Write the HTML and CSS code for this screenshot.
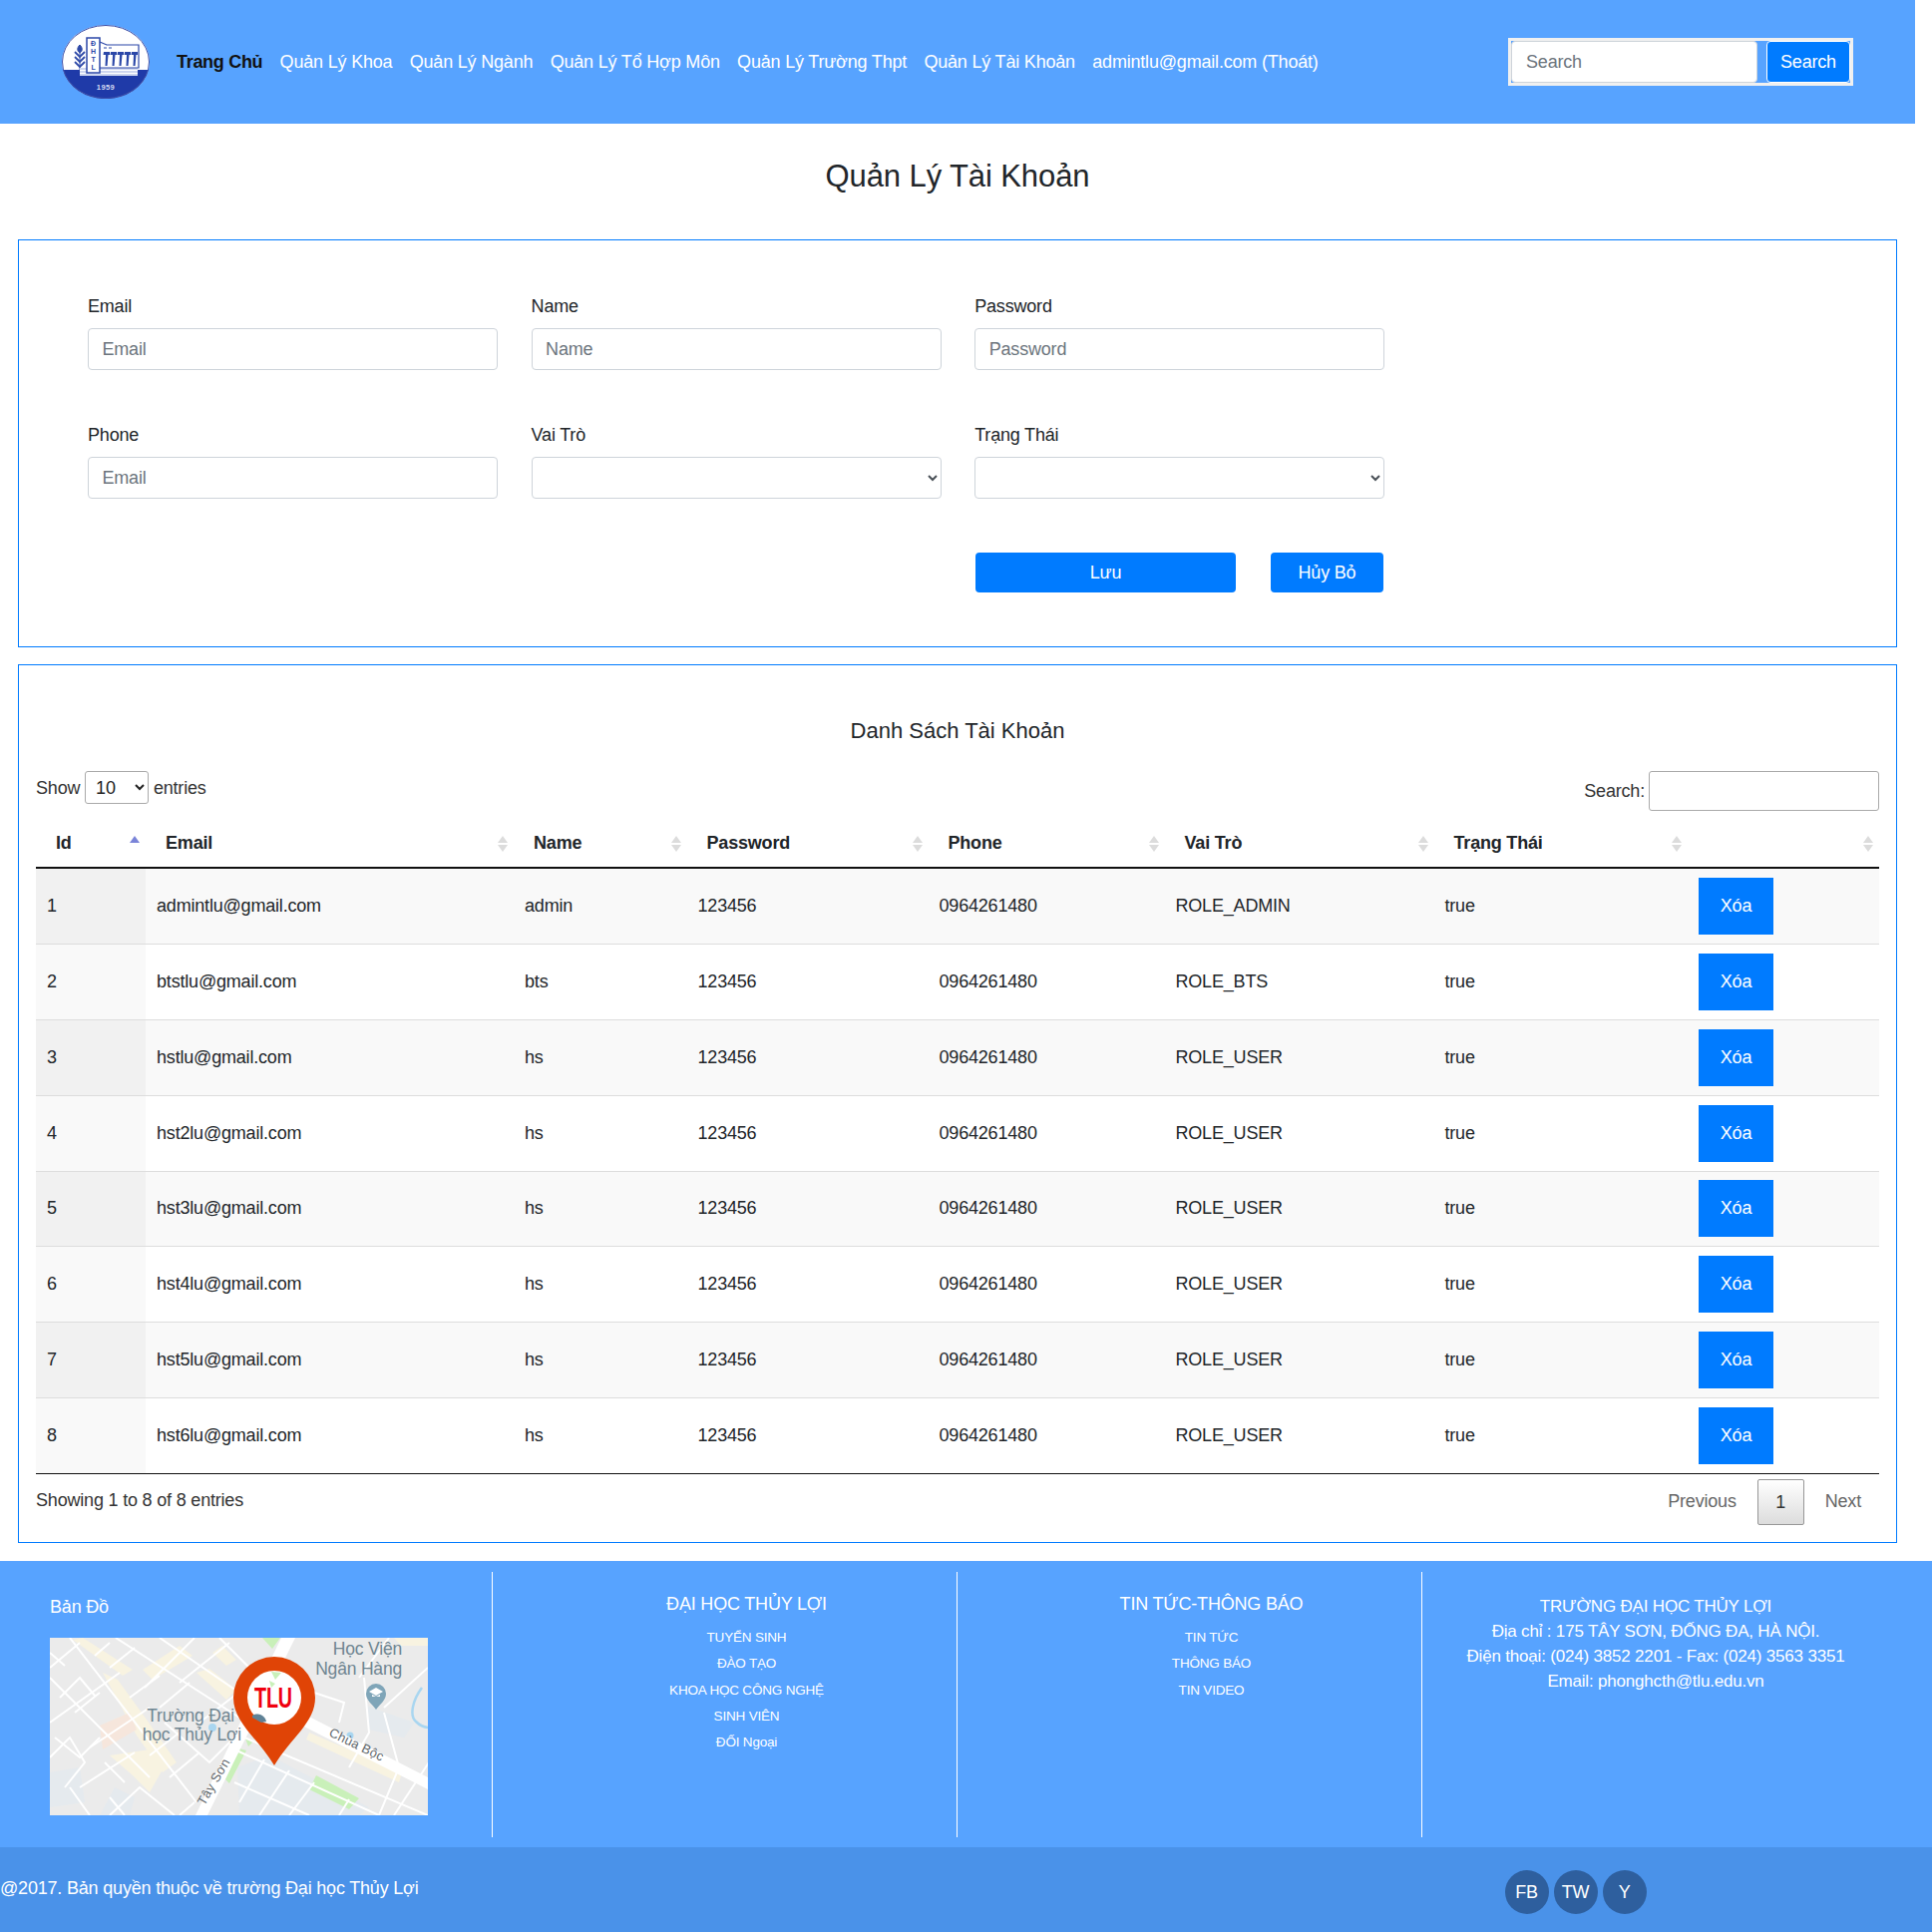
FILE: index.html
```html
<!DOCTYPE html>
<html lang="vi">

<head>
    <meta charset="UTF-8">
    <meta name="viewport" content="width=device-width, initial-scale=1.0">
    <title>Quản Lý Tài Khoản</title>
    <link rel="stylesheet" href="styles.css">
</head>

<body>
    <div class="page">
        <header class="topbar">
            <svg class="logo" viewBox="0 0 88 74">
                <ellipse cx="44" cy="37" rx="44" ry="37" fill="#fff" />
                <path d="M1 45 H87 A44 37 0 0 1 1 45 Z" fill="#1f3aa8" />
                <ellipse cx="44" cy="37" rx="43.500" ry="36.500" fill="none" stroke="#3c4fa8" />
                <path d="M18 20 c-3 3 -3 6 0 8 c3 -2 3 -5 0 -8z M18 28 V47" fill="#2f4aa8" stroke="#2f4aa8" />
                <path d="M13 27 l5 5 5 -5 M13 32 l5 5 5 -5 M13 37 l5 5 5 -5" fill="none" stroke="#2f4aa8" stroke-width="1.800" />
                <rect x="18" y="43" width="58" height="8" fill="#cdd5ef" />
                <path d="M18 45.500 H76 M18 48.500 H76" stroke="#fff" />
                <path d="M38 17 L45 20 H77 V43 H38" fill="#fff" stroke="#2b47a8" stroke-width="1.200" />
                <rect x="25" y="13" width="13" height="35" fill="#fff" stroke="#2b47a8" stroke-width="1.500" />
                <path d="M42 23 h3 M47 23 h3" stroke="#2b47a8" stroke-width="1.200" />
                <path d="M42 27 h6 v3 h-1.500 l-1 11 h-2 l0.500 -11 h-2.500z M49 27 h6 v3 h-1.500 l-1 11 h-2 l0.500 -11 h-2.500z M56 27 h6 v3 h-1.500 l-1 11 h-2 l0.500 -11 h-2.500z M63 27 h6 v3 h-1.500 l-1 11 h-2 l0.500 -11 h-2.500z M70 27 h6 v3 h-1.500 l-1 11 h-2 l0.500 -11 h-2.500z" fill="#2b47a8" />
                <text class="logo-letters" x="31.500" y="21">Đ</text>
                <text class="logo-letters" x="31.500" y="29">H</text>
                <text class="logo-letters" x="31.500" y="37">T</text>
                <text class="logo-letters" x="31.500" y="45">L</text>
                <text class="logo-year" x="44" y="65">1959</text>
            </svg>
            <nav class="nav">
                <a class="active" href="#">Trang Chủ</a>
                <a href="#">Quản Lý Khoa</a>
                <a href="#">Quản Lý Ngành</a>
                <a href="#">Quản Lý Tổ Hợp Môn</a>
                <a href="#">Quản Lý Trường Thpt</a>
                <a href="#">Quản Lý Tài Khoản</a>
                <a href="#">admintlu@gmail.com (Thoát)</a>
            </nav>
            <form class="top-search">
                <input type="text" placeholder="Search">
                <button type="button">Search</button>
            </form>
        </header>

        <h1 class="page-title">Quản Lý Tài Khoản</h1>

        <section class="card form-card">
            <div class="form-grid">
                <div class="form-group">
                    <label for="email">Email</label>
                    <input type="text" id="email" placeholder="Email">
                </div>
                <div class="form-group">
                    <label for="name">Name</label>
                    <input type="text" id="name" placeholder="Name">
                </div>
                <div class="form-group">
                    <label for="password">Password</label>
                    <input type="text" id="password" placeholder="Password">
                </div>
                <div class="form-group">
                    <label for="phone">Phone</label>
                    <input type="text" id="phone" placeholder="Email">
                </div>
                <div class="form-group">
                    <label for="role">Vai Trò</label>
                    <select id="role"></select>
                </div>
                <div class="form-group">
                    <label for="status">Trạng Thái</label>
                    <select id="status"></select>
                </div>
            </div>
            <div class="form-actions">
                <button class="btn btn-save">Lưu</button>
                <button class="btn btn-cancel">Hủy Bỏ</button>
            </div>
        </section>

        <section class="card table-card">
            <h2 class="table-title">Danh Sách Tài Khoản</h2>
            <div class="table-tools">
                <div class="length">Show <select>
                        <option>10</option>
                    </select> entries</div>
                <div class="filter">Search: <input type="text"></div>
            </div>
            <table class="data-table">
                <colgroup>
                    <col class="col-id">
                    <col class="col-email">
                    <col class="col-name">
                    <col class="col-pass">
                    <col class="col-phone">
                    <col class="col-role">
                    <col class="col-status">
                    <col class="col-action">
                </colgroup>
                <thead>
                    <tr>
                        <th class="sort-asc">Id</th>
                        <th>Email</th>
                        <th>Name</th>
                        <th>Password</th>
                        <th>Phone</th>
                        <th>Vai Trò</th>
                        <th>Trạng Thái</th>
                        <th></th>
                    </tr>
                </thead>
                <tbody id="rows"></tbody>
            </table>
            <div class="table-foot">
                <div>Showing 1 to 8 of 8 entries</div>
                <div class="pager">
                    <a href="#">Previous</a>
                    <a class="current" href="#">1</a>
                    <a href="#">Next</a>
                </div>
            </div>
        </section>
    </div>

    <footer>
        <div class="footer-main">
            <div class="footer-col map-col">
                <h4>Bản Đồ</h4>
                <svg class="map" viewBox="0 0 379 178">
                    <rect width="379" height="178" fill="#ebebeb" />
                    <!-- built-up areas -->
                    <g fill="#f8f3e1">
                        <path d="M93 32 L130 8 L143 18 L103 42Z M163 15 L173 8 L187 22 L177 28Z M147 35 L160 31 L187 52 L177 62Z" />
                        <path d="M23 2 L33 0 L83 32 L73 38Z M53 35 L68 42 L97 82 L127 125 L113 135 L87 98Z" />
                        <path d="M60 118 L100 112 L113 132 L100 155 L83 138Z M260 95 L353 135 L350 145 L257 102Z" />
                        <path d="M345 0 H379 V8 H352Z M320 118 L350 130 L345 142 L315 128Z" />
                    </g>
                    <path d="M50 88 L80 75 L87 92 L53 112Z" fill="#f6e6dc" />
                    <g fill="#e5eaee">
                        <path d="M188 130 L220 118 L320 170 L310 178 H190Z" />
                        <path d="M317 68 L365 85 L355 100 L320 92Z M0 135 L30 130 L35 165 L0 170Z M65 150 L85 160 L80 178 H50Z" />
                    </g>
                    <g fill="#c9f0b9">
                        <path d="M213 0 H231 L223 11Z M190 111 L197 113 L180 146 L176 142Z" />
                        <path d="M267 138 L310 161 L300 172 L260 152Z M196 101 L203 105 L199 109Z" />
                    </g>
                    <!-- small streets -->
                    <g fill="none" stroke="#fff" stroke-width="2">
                        <path d="M20 0 L147 165 M0 40 L100 140 M66 0 L190 80 M110 0 L200 62 M170 0 L215 45" />
                        <path d="M0 30 L30 5 M0 85 L70 35 M40 110 L100 70 M30 150 L85 115 M95 50 L145 0 M130 45 L180 5 M150 85 L215 35" />
                        <path d="M0 120 L20 100 L35 125 L15 150 M60 178 L90 150 L125 178 M40 178 L20 150 M115 85 L160 125 L195 90" />
                        <path d="M0 15 L15 28 M10 60 L30 40 L45 58 M25 75 L50 55 M45 18 L60 5 M60 30 L85 10 M80 60 L110 38 M110 70 L140 45" />
                        <path d="M5 100 L30 120 L50 100 M55 125 L75 145 M100 118 L130 95 M120 140 L150 115 M130 178 L145 165 M75 178 L60 160" />
                        <path d="M185 112 L330 178 M195 100 L379 178 M185 145 L260 178 M215 122 L190 165 M240 133 L210 178 M265 145 L240 178 M300 162 L290 178" />
                        <path d="M265 55 L295 65 L290 85 M315 40 L320 95 L300 130 M335 75 L350 130 L330 178 M380 125 L345 178 M340 0 L310 40 M379 30 L335 70" />
                    </g>
                    <path d="M373 50 C364 62 360 78 367 84 C371 88 376 90 380 90" fill="none" stroke="#a9d6f0" stroke-width="2.500" />
                    <circle cx="301" cy="98" r="3.500" fill="#a9d6f0" />
                    <circle cx="163" cy="90" r="4" fill="#a9d6f0" />
                    <!-- main roads -->
                    <path d="M146 178 L232 0 H246 L158 178Z M250 74 L379 140 V152 L245 84Z" fill="#fff" />
                    <text class="map-label" x="353" y="17" text-anchor="end">Học Viện</text>
                    <text class="map-label" x="353" y="37" text-anchor="end">Ngân Hàng</text>
                    <text class="map-label" x="185" y="84" text-anchor="end">Trường Đại</text>
                    <text class="map-label" x="192" y="103" text-anchor="end">học Thủy Lợi</text>
                    <text class="map-road" transform="translate(279 98) rotate(26)">Chùa Bộc</text>
                    <text class="map-road" transform="translate(155 169) rotate(-60)">Tây Sơn</text>
                    <path d="M317 56 a10 10 0 1 1 20 0 c0 7 -6 10 -10 16 c-4 -6 -10 -9 -10 -16z" fill="#7fa5b8" />
                    <path d="M320 54 l7 -4 7 4 -7 4z M323 57 v2 h8 v-2 l-4 2z" fill="#fff" />
                    <!-- pin -->
                    <path d="M225 128 C208 100 184 85 184 60 A41 41 0 0 1 266 60 C266 85 242 100 225 128Z" fill="#e04406" />
                    <circle cx="225" cy="60" r="27" fill="#fff" />
                    <path d="M222 34 L232 35 L226 42Z M220 43 L226 46 L222 50Z" fill="#c9f0b9" />
                    <path d="M203 78 A9 9 0 0 1 217 84 L212 85 L203 80Z" fill="#5f8296" />
                    <text class="pin-text" x="205" y="70" textLength="38" lengthAdjust="spacingAndGlyphs">TLU</text>
                </svg>
            </div>
            <div class="footer-col link-col">
                <h4>ĐẠI HỌC THỦY LỢI</h4>
                <a href="#">TUYỂN SINH</a>
                <a href="#">ĐÀO TẠO</a>
                <a href="#">KHOA HỌC CÔNG NGHỆ</a>
                <a href="#">SINH VIÊN</a>
                <a href="#">ĐỐI Ngoại</a>
            </div>
            <div class="footer-col link-col">
                <h4>TIN TỨC-THÔNG BÁO</h4>
                <a href="#">TIN TỨC</a>
                <a href="#">THÔNG BÁO</a>
                <a href="#">TIN VIDEO</a>
            </div>
            <div class="footer-col address-col">
                <p>TRƯỜNG ĐẠI HỌC THỦY LỢI</p>
                <p>Địa chỉ : 175 TÂY SƠN, ĐỐNG ĐA, HÀ NỘI.</p>
                <p>Điện thoại: (024) 3852 2201 - Fax: (024) 3563 3351</p>
                <p>Email: phonghcth@tlu.edu.vn</p>
            </div>
        </div>
        <div class="footer-bottom">
            <p>@2017. Bản quyền thuộc về trường Đại học Thủy Lợi</p>
            <div class="social">
                <a href="#">FB</a>
                <a href="#">TW</a>
                <a href="#">Y</a>
            </div>
        </div>
    </footer>

    <script>
        const accounts = [
            [1, 'admintlu@gmail.com', 'admin', 'ROLE_ADMIN'],
            [2, 'btstlu@gmail.com', 'bts', 'ROLE_BTS'],
            [3, 'hstlu@gmail.com', 'hs', 'ROLE_USER'],
            [4, 'hst2lu@gmail.com', 'hs', 'ROLE_USER'],
            [5, 'hst3lu@gmail.com', 'hs', 'ROLE_USER'],
            [6, 'hst4lu@gmail.com', 'hs', 'ROLE_USER'],
            [7, 'hst5lu@gmail.com', 'hs', 'ROLE_USER'],
            [8, 'hst6lu@gmail.com', 'hs', 'ROLE_USER']
        ];

        const rows = document.getElementById('rows');
        accounts.forEach(a => {
            let row = document.createElement('tr');
            row.innerHTML = `<td>${a[0]}</td><td>${a[1]}</td><td>${a[2]}</td><td>123456</td>
                <td>0964261480</td><td>${a[3]}</td><td>true</td><td><button class="btn-delete">Xóa</button></td>`;
            rows.appendChild(row);
        });
    </script>
</body>

</html>
```

FILE: styles.css
```css
* {
    box-sizing: border-box;
}

body {
    font-family: "Liberation Sans", Arial, sans-serif;
    font-size: 16px;
    line-height: 1.5;
    letter-spacing: -0.19px;
    color: #212529;
    margin: 0;
    padding: 0;
    background: #fff;
}

a {
    text-decoration: none;
}

input,
select,
button {
    letter-spacing: inherit;
}

.page {
    width: 1920px;
}

/* top bar */
.topbar {
    height: 124px;
    background: #57a3ff;
    display: flex;
    align-items: center;
    padding-left: 62px;
}

.logo {
    width: 88px;
    height: 74px;
    flex: none;
}

.logo-letters {
    font-size: 7px;
    font-weight: bold;
    fill: #2b47a8;
    text-anchor: middle;
}

.logo-year {
    font-size: 7.500px;
    font-weight: bold;
    letter-spacing: 0.4px;
    fill: #d6dcf2;
    text-anchor: middle;
}

.nav {
    display: flex;
    gap: 17.300px;
    margin-left: 27px;
    font-size: 18px;
}

.nav a {
    color: #fff;
    white-space: nowrap;
}

.nav a.active {
    color: #111;
    font-weight: bold;
    letter-spacing: -0.3px;
}

.top-search {
    margin-left: auto;
    margin-right: 62px;
    width: 346px;
    height: 48px;
    border: 3px solid #f0f0f0;
    display: flex;
    justify-content: space-between;
}

.top-search input {
    width: 247px;
    border: 1px solid #ced4da;
    border-radius: 4px;
    padding: 6px 14px;
    font: inherit;
    font-size: 18px;
}

.top-search input::placeholder {
    color: #6c757d;
}

.top-search button {
    width: 84px;
    background: #007bff;
    color: #fff;
    border: 1px solid #fff;
    border-radius: 4px;
    font: inherit;
    font-size: 18px;
}

.page-title {
    margin: 0;
    padding-top: 33px;
    height: 116px;
    font-size: 31px;
    font-weight: 400;
    letter-spacing: -0.1px;
    line-height: 40px;
    text-align: center;
}

.card {
    margin: 0 18px;
    border: 1px solid #007bff;
}

/* form */
.form-card {
    height: 409px;
    padding: 53px 0 0 69px;
    margin-bottom: 17px;
}

.form-grid {
    display: grid;
    grid-template-columns: repeat(3, 411px);
    column-gap: 33.600px;
    row-gap: 52px;
}

label {
    display: block;
    font-size: 18px;
    line-height: 27px;
    margin-bottom: 8px;
}

.form-group input,
.form-group select {
    display: block;
    width: 100%;
    height: 42px;
    padding: 6px 13.500px;
    border: 1px solid #ced4da;
    border-radius: 4px;
    background: #fff;
    font: inherit;
    font-size: 18px;
    color: #495057;
}

.form-group input::placeholder {
    color: #6c757d;
}

.form-actions {
    display: flex;
    margin: 54px 0 0 890px;
    gap: 35px;
}

.btn {
    height: 40px;
    background: #007bff;
    color: #fff;
    border: 0;
    border-radius: 4px;
    font: inherit;
    font-size: 18px;
}

.btn-save {
    width: 261px;
}

.btn-cancel {
    width: 113px;
}

/* table */
.table-card {
    height: 881px;
    padding: 0 17px;
    margin-bottom: 18px;
}

.table-title {
    margin: 0;
    padding-top: 51px;
    height: 106px;
    font-size: 22px;
    font-weight: 400;
    letter-spacing: 0;
    line-height: 30px;
    text-align: center;
}

.table-tools {
    display: flex;
    justify-content: space-between;
    height: 47px;
    color: #333;
    font-size: 18px;
}

.length select {
    width: 64px;
    height: 33px;
    padding: 0 6px;
    border: 1px solid #aaa;
    border-radius: 3px;
    background: #fff;
    font: inherit;
    color: #222;
}

.filter {
    display: flex;
    align-items: center;
    height: 40px;
    gap: 4px;
}

.filter input {
    width: 231px;
    height: 40px;
    border: 1px solid #aaa;
    border-radius: 3px;
}

.data-table {
    width: 1848px;
    table-layout: fixed;
    border-collapse: collapse;
    font-size: 18px;
}

.col-id { width: 110px; }
.col-email { width: 369px; }
.col-name { width: 173.500px; }
.col-pass { width: 242px; }
.col-phone { width: 237px; }
.col-role { width: 270px; }
.col-status { width: 254.500px; }
.col-action { width: 192px; }

.data-table th {
    position: relative;
    height: 50px;
    padding: 2px 20px 0;
    text-align: left;
    border-bottom: 2px solid #111;
}

/* sort arrows */
.data-table th::before,
.data-table th::after {
    content: "";
    position: absolute;
    right: 6px;
    border-left: 5px solid transparent;
    border-right: 5px solid transparent;
}

.data-table th::before {
    top: 18px;
    border-bottom: 7px solid #dcdcdc;
}

.data-table th::after {
    top: 27px;
    border-top: 7px solid #dcdcdc;
}

.data-table th.sort-asc::before {
    border-bottom-color: #7a84d8;
}

.data-table th.sort-asc::after {
    display: none;
}

.data-table td {
    height: 76px;
    padding: 8px 11px;
    border-bottom: 1px solid #ddd;
    background: #fff;
}

.data-table tr:nth-child(5) td {
    height: 75px;
}

.data-table tr:nth-child(odd) td {
    background: #f9f9f9;
}

.data-table td:first-child {
    background: #f9f9f9;
}

.data-table tr:nth-child(odd) td:first-child {
    background: #f1f1f1;
}

.data-table tr:last-child td {
    border-bottom: 1px solid #111;
}

.btn-delete {
    display: block;
    width: 75px;
    height: 57px;
    background: #007bff;
    color: #fff;
    border: 0;
    font: inherit;
}

.table-foot {
    display: flex;
    justify-content: space-between;
    padding-top: 13px;
    font-size: 18px;
    color: #333;
}

.pager {
    display: flex;
    align-items: center;
    margin: -8px 18px 0 0;
    gap: 21px;
}

.pager a {
    color: #666;
}

.pager a.current {
    width: 47px;
    height: 46px;
    line-height: 44px;
    text-align: center;
    color: #333;
    border: 1px solid #979797;
    border-radius: 2px;
    background: linear-gradient(#fff, #dcdcdc);
}

/* footer */
footer {
    color: #fff;
}

.footer-main {
    height: 287px;
    padding-top: 11px;
    background: #57a3ff;
    display: grid;
    grid-template-columns: 494px 466px 466px 1fr;
}

.footer-col {
    height: 266px;
    border-right: 1px solid #fff;
}

.footer-col h4 {
    margin: 0;
    font-size: 18px;
    font-weight: 400;
    line-height: 27px;
}

.map-col {
    padding: 22px 0 0 50px;
}

.map {
    display: block;
    width: 379px;
    height: 178px;
    margin-top: 17px;
}

.map-label {
    font-size: 17.500px;
    fill: #6f8591;
}

.map-road {
    font-size: 13px;
    letter-spacing: 0.3px;
    fill: #62686c;
}

.pin-text {
    font-size: 29px;
    font-weight: bold;
    fill: #f0000f;
}

.link-col {
    padding: 19px 0 0 44px;
    text-align: center;
}

.link-col h4 {
    margin-bottom: 7px;
}

.link-col a {
    display: block;
    color: #fff;
    font-size: 13.500px;
    line-height: 26.250px;
}

.address-col {
    border-right: 0;
    padding: 22px 0 0 0;
    width: 468px;
    text-align: center;
}

.address-col p {
    margin: 0;
    font-size: 17px;
    line-height: 25px;
}

.footer-bottom {
    height: 85px;
    background: #4a92e9;
    display: flex;
    align-items: center;
}

.footer-bottom p {
    margin: 0 0 2px;
    font-size: 18px;
}

.social {
    display: flex;
    gap: 5px;
    margin-left: 1089px;
    margin-top: 4px;
}

.social a {
    width: 44px;
    height: 44px;
    border-radius: 50%;
    background: #2e5f9e;
    color: #fff;
    font-size: 18px;
    line-height: 44px;
    text-align: center;
}
```
